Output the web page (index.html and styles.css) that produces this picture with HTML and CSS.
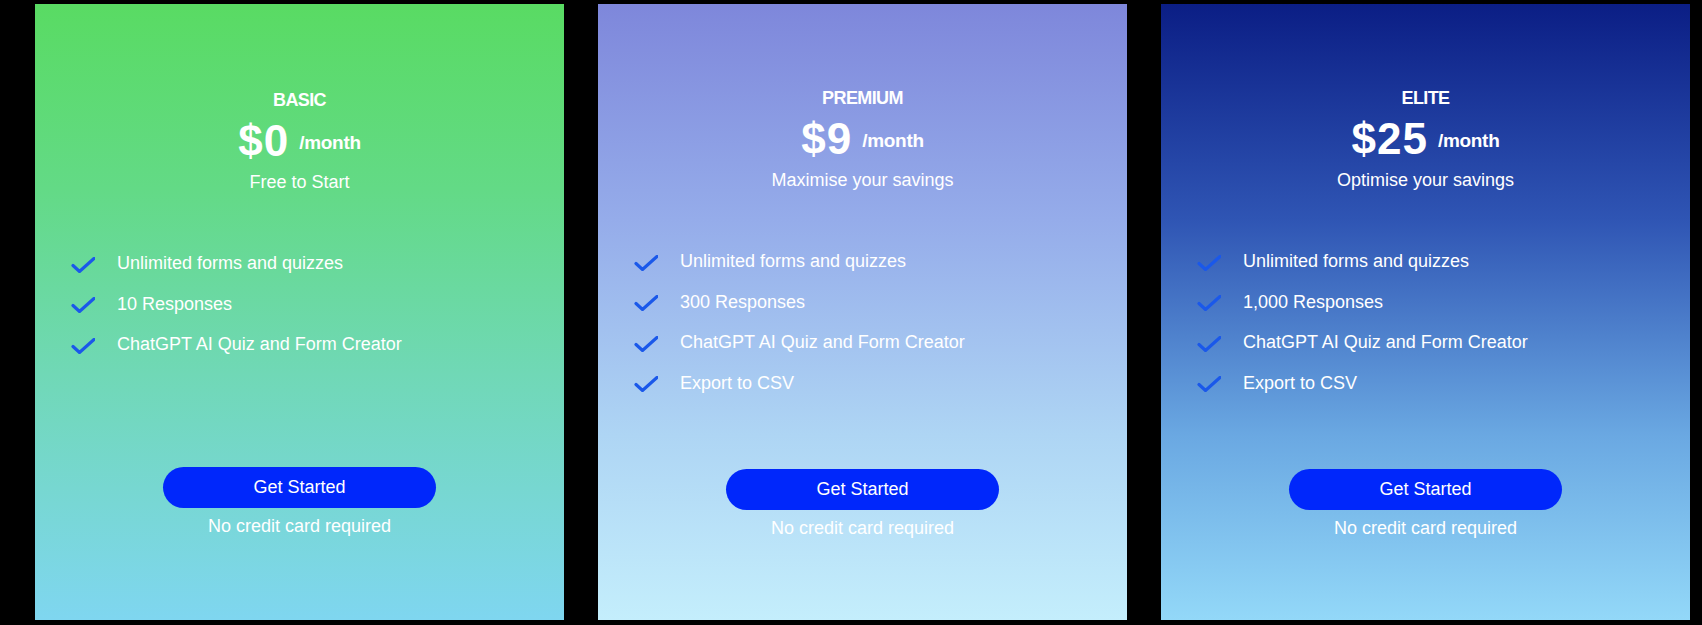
FILE: index.html
```html
<!DOCTYPE html>
<html lang="en">
<head>
<meta charset="utf-8">
<title>Pricing</title>
<link rel="stylesheet" href="styles.css">
</head>
<body>
<main class="pricing">
  <section class="card card--basic card--shifted">
    <header class="plan">
      <h2 class="plan-name">BASIC</h2>
      <div class="price"><span class="amount">$0</span><span class="period">/month</span></div>
      <p class="tagline">Free to Start</p>
    </header>
    <ul class="features">
      <li><svg class="check" viewBox="0 0 24 16"><path d="M2 8.5 L8.5 14.5 L23 1.5"/></svg><span>Unlimited forms and quizzes</span></li>
      <li><svg class="check" viewBox="0 0 24 16"><path d="M2 8.5 L8.5 14.5 L23 1.5"/></svg><span>10 Responses</span></li>
      <li><svg class="check" viewBox="0 0 24 16"><path d="M2 8.5 L8.5 14.5 L23 1.5"/></svg><span>ChatGPT AI Quiz and Form Creator</span></li>
    </ul>
    <footer class="cta">
      <a class="btn" href="#">Get Started</a>
      <p class="note">No credit card required</p>
    </footer>
  </section>

  <section class="card card--premium">
    <header class="plan">
      <h2 class="plan-name">PREMIUM</h2>
      <div class="price"><span class="amount">$9</span><span class="period">/month</span></div>
      <p class="tagline">Maximise your savings</p>
    </header>
    <ul class="features">
      <li><svg class="check" viewBox="0 0 24 16"><path d="M2 8.5 L8.5 14.5 L23 1.5"/></svg><span>Unlimited forms and quizzes</span></li>
      <li><svg class="check" viewBox="0 0 24 16"><path d="M2 8.5 L8.5 14.5 L23 1.5"/></svg><span>300 Responses</span></li>
      <li><svg class="check" viewBox="0 0 24 16"><path d="M2 8.5 L8.5 14.5 L23 1.5"/></svg><span>ChatGPT AI Quiz and Form Creator</span></li>
      <li><svg class="check" viewBox="0 0 24 16"><path d="M2 8.5 L8.5 14.5 L23 1.5"/></svg><span>Export to CSV</span></li>
    </ul>
    <footer class="cta">
      <a class="btn" href="#">Get Started</a>
      <p class="note">No credit card required</p>
    </footer>
  </section>

  <section class="card card--elite">
    <header class="plan">
      <h2 class="plan-name">ELITE</h2>
      <div class="price"><span class="amount">$25</span><span class="period">/month</span></div>
      <p class="tagline">Optimise your savings</p>
    </header>
    <ul class="features">
      <li><svg class="check" viewBox="0 0 24 16"><path d="M2 8.5 L8.5 14.5 L23 1.5"/></svg><span>Unlimited forms and quizzes</span></li>
      <li><svg class="check" viewBox="0 0 24 16"><path d="M2 8.5 L8.5 14.5 L23 1.5"/></svg><span>1,000 Responses</span></li>
      <li><svg class="check" viewBox="0 0 24 16"><path d="M2 8.5 L8.5 14.5 L23 1.5"/></svg><span>ChatGPT AI Quiz and Form Creator</span></li>
      <li><svg class="check" viewBox="0 0 24 16"><path d="M2 8.5 L8.5 14.5 L23 1.5"/></svg><span>Export to CSV</span></li>
    </ul>
    <footer class="cta">
      <a class="btn" href="#">Get Started</a>
      <p class="note">No credit card required</p>
    </footer>
  </section>
</main>
</body>
</html>
```

FILE: styles.css
```css
* { box-sizing: border-box; }

html, body {
  margin: 0;
  padding: 0;
  background: #000;
}

body {
  font-family: "Liberation Sans", Arial, sans-serif;
  color: #fff;
  width: 1702px;
  height: 625px;
  overflow: hidden;
}

.pricing {
  display: flex;
  gap: 34px;
  height: 625px;
  padding: 4px 0 5px 35px;
}

.card {
  flex: 0 0 529px;
  display: flex;
  flex-direction: column;
  padding: 83px 0 81.5px;
}

.card--shifted {
  padding: 85px 0 83.5px;
}

.card--basic {
  background: linear-gradient(180deg, #59db63 0%, #63da86 30%, #70d8b6 60%, #7fd6f0 100%);
}

.card--premium {
  background: linear-gradient(180deg, #7e87db 0%, #95acea 35%, #aed5f4 70%, #c4eefc 100%);
}

.card--elite {
  background: linear-gradient(180deg, #0b1e85 0%, #2f55b4 35%, #6aa8e2 70%, #93d8f8 100%);
}

.plan {
  display: flex;
  flex-direction: column;
  align-items: center;
}

.plan-name {
  margin: 0;
  font-size: 18px;
  line-height: 22px;
  font-weight: 700;
  letter-spacing: -0.6px;
}

.price {
  display: flex;
  align-items: flex-start;
  gap: 10px;
  margin-top: 4px;
  height: 52px;
}

.amount {
  font-size: 44px;
  line-height: 52px;
  font-weight: 700;
  letter-spacing: 1px;
}

.period {
  font-size: 19px;
  line-height: 22px;
  font-weight: 700;
  margin-top: 16.5px;
  letter-spacing: -0.3px;
}

.tagline {
  margin: 4px 0 0;
  font-size: 18px;
  line-height: 22px;
}

.features {
  list-style: none;
  margin: 59px 0 0;
  padding: 0 0 0 36px;
  display: flex;
  flex-direction: column;
  gap: 18.6px;
}

.features li {
  display: flex;
  align-items: center;
  gap: 22px;
  font-size: 18px;
  line-height: 22px;
}

.check {
  width: 24px;
  height: 16px;
  flex: 0 0 24px;
  margin-top: 3px;
  fill: none;
  stroke: #1a58ea;
  stroke-width: 3.2;
  stroke-linecap: round;
  stroke-linejoin: miter;
}

.cta {
  margin-top: auto;
  display: flex;
  flex-direction: column;
  align-items: center;
}

.btn {
  display: block;
  width: 273px;
  height: 41px;
  border-radius: 21px;
  background: #0027fb;
  color: #fff;
  text-decoration: none;
  text-align: center;
  font-size: 18px;
  line-height: 41px;
}

.note {
  margin: 6.5px 0 0;
  font-size: 18px;
  line-height: 22px;
}
```
